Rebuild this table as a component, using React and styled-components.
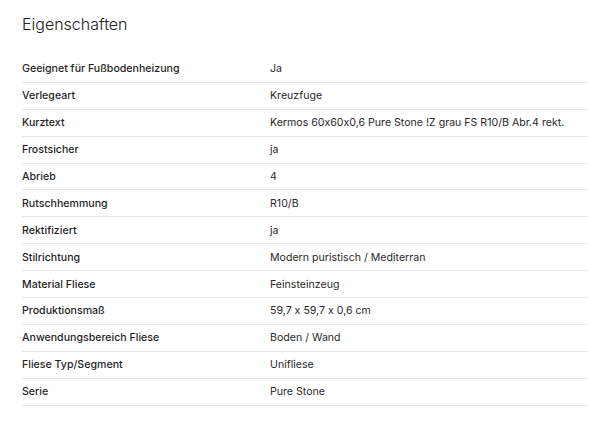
import React from "react";
import styled, { createGlobalStyle } from "styled-components";

const GlobalStyle = createGlobalStyle`
  body {
    margin: 0;
    background: #fff;
    font-family: Inter, "Liberation Sans", Arial, sans-serif;
    font-feature-settings: "calt" 0;
    color: #1f1f1f;
  }
`;

const Section = styled.section`
  padding: 14px 1px 0 22px;
`;

const Title = styled.h2`
  margin: 0 0 22px;
  font-size: 16px;
  font-weight: 300;
  line-height: 20px;
  color: #222;
`;

const Table = styled.div`
  display: flex;
  flex-direction: column;
`;

const Row = styled.div`
  display: grid;
  grid-template-columns: 248px 1fr;
  height: 25.9px;
  align-items: center;
  border-bottom: 1px solid #e6e6e6;
  font-size: 10.6px;
`;

const Label = styled.div`
  font-weight: 500;
  color: #1f1f1f;
`;

const Value = styled.div`
  color: #2a2a2a;
`;

const rows = [
  ["Geeignet für Fußbodenheizung", "Ja"],
  ["Verlegeart", "Kreuzfuge"],
  ["Kurztext", "Kermos 60x60x0,6 Pure Stone !Z grau FS R10/B Abr.4 rekt."],
  ["Frostsicher", "ja"],
  ["Abrieb", "4"],
  ["Rutschhemmung", "R10/B"],
  ["Rektifiziert", "ja"],
  ["Stilrichtung", "Modern puristisch / Mediterran"],
  ["Material Fliese", "Feinsteinzeug"],
  ["Produktionsmaß", "59,7 x 59,7 x 0,6 cm"],
  ["Anwendungsbereich Fliese", "Boden / Wand"],
  ["Fliese Typ/Segment", "Unifliese"],
  ["Serie", "Pure Stone"],
];

const App = () => {
  return (
    <>
      <GlobalStyle />
      <Section>
        <Title>Eigenschaften</Title>
        <Table>
          {rows.map(([label, value]) => (
            <Row key={label}>
              <Label>{label}</Label>
              <Value>{value}</Value>
            </Row>
          ))}
        </Table>
      </Section>
    </>
  );
};

export default App;
